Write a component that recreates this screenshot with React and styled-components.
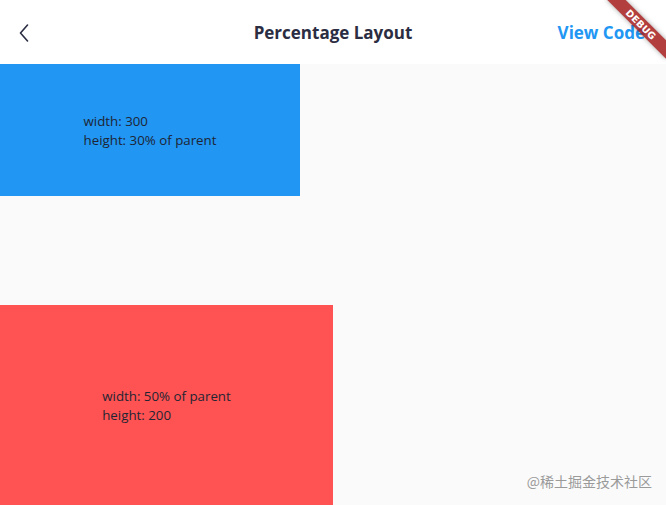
import styled, { createGlobalStyle } from "styled-components"

const GlobalStyle = createGlobalStyle`
  html, body {
    margin: 0;
    padding: 0;
    height: 100%;
    overflow: hidden;
    background: #fafafa;
  }
  #root {
    height: 100%;
  }
`

export default function App() {
    return (
        <>
            <GlobalStyle />
            <Screen>
                <AppBar>
                    <BackButton aria-label="back">
                        <svg width="10" height="18" viewBox="0 0 10 18" fill="none">
                            <path d="M8.5 1 L1.5 9 L8.5 17" stroke="#2b2d42" strokeWidth="1.6" strokeLinecap="round" strokeLinejoin="round" />
                        </svg>
                    </BackButton>
                    <Title>Percentage Layout</Title>
                    <Action>View Code</Action>
                </AppBar>

                <Body>
                    <Box $bg="#2196f3" $width="300px" $height="30%">
                        <Label>
                            width: 300<br />
                            height: 30% of parent
                        </Label>
                    </Box>
                    <Box $bg="#ff5252" $width="50%" $height="200px">
                        <Label>
                            width: 50% of parent<br />
                            height: 200
                        </Label>
                    </Box>
                    <Watermark>@稀土掘金技术社区</Watermark>
                </Body>

                <DebugBanner>DEBUG</DebugBanner>
            </Screen>
        </>
    )
}

const Screen = styled.div`
  position: relative;
  height: 100%;
  display: flex;
  flex-direction: column;
  overflow: hidden;
  font-family: "Open Sans", "Noto Sans", sans-serif;
`

const AppBar = styled.header`
  height: 64px;
  flex-shrink: 0;
  background: #ffffff;
  display: flex;
  align-items: center;
  justify-content: space-between;
  padding: 0 21px 0 18px;
  position: relative;
`

const BackButton = styled.button`
  border: none;
  background: none;
  padding: 0;
  width: 12px;
  height: 20px;
  display: flex;
  align-items: center;
  justify-content: center;
  margin-top: 1px;
`

const Title = styled.h1`
  position: absolute;
  left: 0;
  right: 0;
  margin: 0;
  text-align: center;
  font-size: 17px;
  font-weight: 700;
  color: #2b2d42;
  pointer-events: none;
`

const Action = styled.span`
  font-size: 17px;
  font-weight: 700;
  color: #2196f3;
`

const Body = styled.main`
  flex: 1;
  display: flex;
  flex-direction: column;
  justify-content: space-between;
  position: relative;
`

const Box = styled.div`
  background: ${p => p.$bg};
  width: ${p => p.$width};
  height: ${p => p.$height};
  display: flex;
  align-items: center;
  justify-content: center;
`

const Label = styled.div`
  font-size: 13.3px;
  line-height: 19px;
  color: #1e2533;
  margin-top: 2px;
`

const Watermark = styled.div`
  position: absolute;
  right: 14px;
  bottom: 14px;
  font-size: 14px;
  color: #9a9a9a;
  font-family: "Noto Sans CJK SC", sans-serif;
`

const DebugBanner = styled.div`
  position: absolute;
  top: 18px;
  right: -17px;
  width: 84px;
  height: 13px;
  transform: rotate(45deg);
  background: rgba(165, 28, 28, 0.85);
  box-shadow: 0 0 5px rgba(0, 0, 0, 0.35);
  color: #ffffff;
  font-family: "DejaVu Sans", sans-serif;
  font-size: 9.5px;
  font-weight: 700;
  line-height: 13px;
  text-align: center;
  letter-spacing: 0.2px;
`
